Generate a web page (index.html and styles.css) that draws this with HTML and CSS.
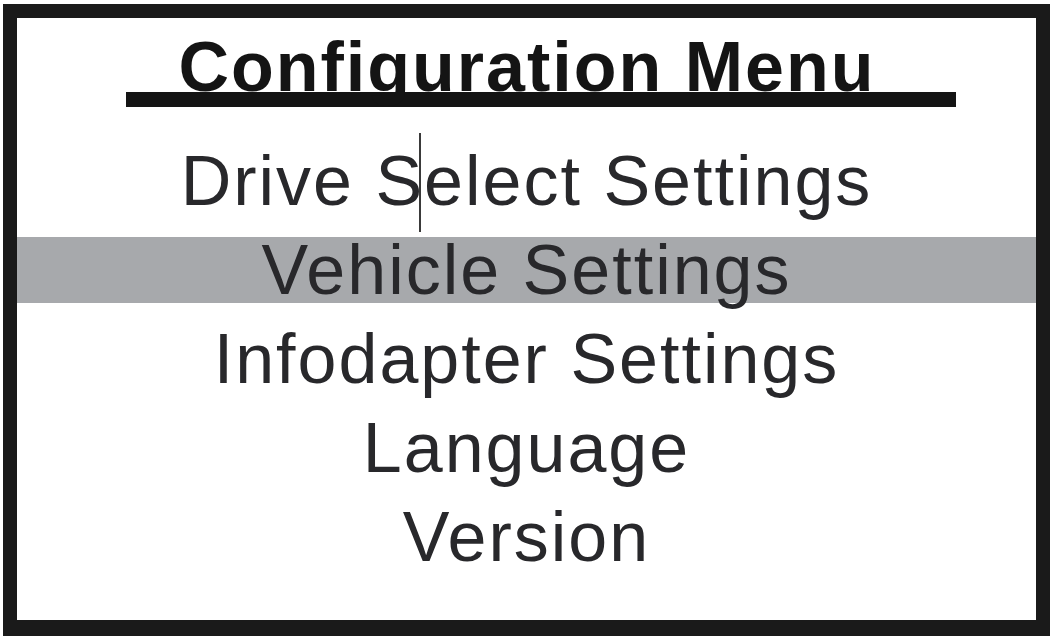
FILE: index.html
```html
<!DOCTYPE html>
<html lang="en">
<head>
	<meta charset="UTF-8">
	<title>Configuration Menu</title>
	<link rel="stylesheet" href="styles.css">
</head>
<body>
	<section class="screen">
		<div class="head">
			<h1 class="title">Configuration Menu</h1>
		</div>
		<ul class="menu">
			<li>Drive S<span class="caret"></span>elect Settings</li>
			<li class="active">Vehicle Settings</li>
			<li>Infodapter Settings</li>
			<li>Language</li>
			<li>Version</li>
		</ul>
	</section>
</body>
</html>
```

FILE: styles.css
```css
body{
	margin:0;
	background:#fff;
	font-family:"Liberation Sans", Arial, sans-serif;
}
ul,li{
	margin:0;
	padding:0;
	list-style:none;
}
.screen{
	box-sizing:border-box;
	width:1047px;
	height:632px;
	margin:4px 0 0 3px;
	border:14px solid #1a1a1a;
	border-bottom-width:16px;
	background:#fff;
	padding-top:24px;
}
.head{
	text-align:center;
}
.title{
	display:inline-block;
	margin:0 0 0 29px;
	padding:0 80px 0 52px;
	font-size:70px;
	font-weight:bold;
	line-height:50px;
	letter-spacing:2px;
	color:#141414;
	border-bottom:15px solid #141414;
}
.menu{
	display:flex;
	flex-direction:column;
	gap:23px;
	margin-top:41px;
}
.menu li{
	height:66px;
	line-height:66px;
	text-align:center;
	font-size:70px;
	letter-spacing:2px;
	color:#28282b;
}
.menu li.active{
	background:#a7a9ac;
}
/* text cursor */
.caret{
	position:relative;
}
.caret::after{
	content:'';
	position:absolute;
	left:-5px;
	top:-9px;
	width:2px;
	height:99px;
	background:#3a3a3a;
}
```
